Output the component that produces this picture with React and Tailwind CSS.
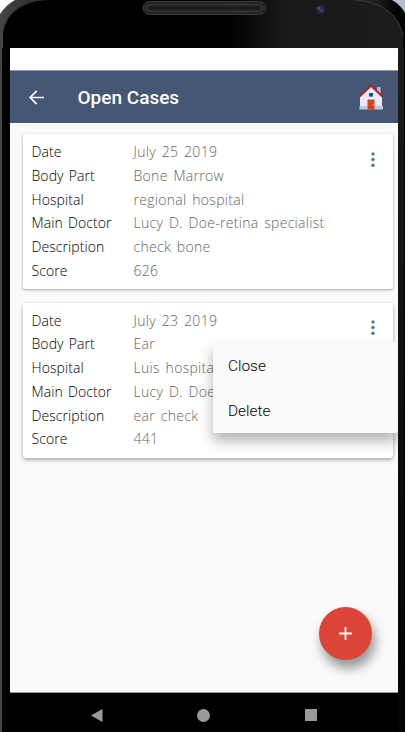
const FIELDS = ['Date', 'Body Part', 'Hospital', 'Main Doctor', 'Description', 'Score'];

const CASES = [
  ['July 25 2019', 'Bone Marrow', 'regional hospital', 'Lucy D. Doe-retina specialist', 'check bone', '626'],
  ['July 23 2019', 'Ear', 'Luis hospital', 'Lucy D. Doe-retina specialist', 'ear check', '441'],
];

function TopBezel() {
  return (
    <svg className="block h-12 w-full" viewBox="0 0 405 48">
      <defs>
        <linearGradient id="shine" x1="0" x2="1" y1="0" y2="0">
          <stop offset="0" stopColor="#000" />
          <stop offset="0.56" stopColor="#000" />
          <stop offset="0.7" stopColor="#191919" />
          <stop offset="1" stopColor="#1c1c1c" />
        </linearGradient>
        <linearGradient id="rim" x1="0" x2="1" y1="0" y2="0">
          <stop offset="0" stopColor="#444" />
          <stop offset="0.08" stopColor="#303030" />
          <stop offset="0.14" stopColor="#0c0c0c" />
          <stop offset="0.92" stopColor="#222" />
          <stop offset="0.97" stopColor="#080808" />
          <stop offset="1" stopColor="#000" />
        </linearGradient>
        <radialGradient id="lens">
          <stop offset="0" stopColor="#35406e" />
          <stop offset="0.55" stopColor="#202642" />
          <stop offset="1" stopColor="#181818" />
        </radialGradient>
      </defs>
      <rect width="20" height="20" fill="#fff" />
      <rect x="385" width="20" height="20" fill="#b6bfd0" />
      <path d="M0 48V14Q6 5 15 0H392Q400 4 405 13V48Z" fill="url(#rim)" />
      <path d="M3 48V34C5 14 22 0 52 0H356C381 1 400 16 403 36V48Z" fill="url(#shine)" />
      <path d="M356 .5C381 1 400 16 403 36" fill="none" stroke="#444" strokeWidth=".8" />
      <rect x="143" y="1.5" width="123" height="13" rx="6.5" fill="#262626" stroke="#373737" />
      <rect x="147" y="5" width="115" height="6" rx="3" fill="#1c1c1c" stroke="#494949" strokeWidth=".8" />
      <circle cx="320.5" cy="9.5" r="6" fill="url(#lens)" />
      <circle cx="318.5" cy="8" r="1.2" fill="#4c5681" />
      <circle cx="322" cy="11" r="1" fill="#414c7b" />
    </svg>
  );
}

function House() {
  return (
    <svg className="h-[26px] w-6" viewBox="0 0 24 26">
      <rect x="18" y="3" width="3.6" height="8" fill="#aebbd9" />
      <path d="M1 12L12 2L23 12V25H1Z" fill="#e9ebf8" />
      <rect x="0.5" y="22" width="23.5" height="3.5" fill="#c2c8e8" />
      <path d="M.6 12.6L12 1.8L23.4 12.6" fill="none" stroke="#b71c1c" strokeWidth="1.9" />
      <rect x="10" y="9" width="4" height="3.6" fill="#01579b" />
      <rect x="8.5" y="15.5" width="7" height="10" fill="#d84315" />
      <rect x="13.5" y="20" width="1" height="2" fill="#ff8a65" />
    </svg>
  );
}

function Dots() {
  return (
    <svg className="h-4 w-1 fill-[#557c8e]" viewBox="0 0 4 16">
      <circle cx="2" cy="2" r="1.75" />
      <circle cx="2" cy="7.6" r="1.75" />
      <circle cx="2" cy="13.2" r="1.75" />
    </svg>
  );
}

function CaseCard({ values, raised, children }) {
  return (
    <article
      className={
        'relative ml-[12.5px] flex h-[155px] w-[370.5px] justify-between rounded-[3px] bg-white pl-[9px] pr-[18px] ' +
        (raised ? 'shadow-[0_2px_4px_rgba(0,0,0,0.32)]' : 'shadow-[0_1px_3px_rgba(0,0,0,0.34)]')
      }
    >
      <dl className="mt-[6.3px] grid auto-rows-[23.7px] grid-cols-[102px_auto] items-center whitespace-nowrap font-['Open_Sans',sans-serif] text-[14px] font-light leading-[23.7px]">
        {FIELDS.map((label, i) => (
          <div key={label} className="contents">
            <dt className="tracking-[0.08px] text-[#000] [word-spacing:1.5px]">{label}</dt>
            <dd className="tracking-[0.3px] text-[#666] [word-spacing:1.8px]">{values[i]}</dd>
          </div>
        ))}
      </dl>
      <button className="mt-[17.5px] h-4" aria-label="Case options">
        <Dots />
      </button>
      {children}
    </article>
  );
}

export default function App() {
  return (
    <div className="flex h-[732px] w-[405px] flex-col overflow-hidden bg-black font-[Roboto,sans-serif]">
      <TopBezel />
      <div className="flex h-[684px]">
        <div className="w-[10px] border-l-[2px] border-[#444] bg-black" />
        <div className="flex w-[388px] flex-col overflow-hidden">
          <div className="h-[22px] bg-white" />
          <header className="flex h-[53px] items-center border-t border-[#8c98a8] bg-[#455775] pl-[18.5px] pr-[15px]">
            <svg className="h-[15px] w-[15px]" viewBox="0 0 16 16" fill="none" stroke="#fff" strokeWidth="1.8">
              <path d="M8.2 1L1.2 8L8.2 15M1.2 8H16" />
            </svg>
            <h1 className="ml-[34px] flex-1 pt-[2px] text-[19px] font-medium text-white">Open Cases</h1>
            <House />
          </header>
          <main className="flex h-[570px] flex-col gap-[13.5px] border-b border-[#999] bg-[#fafafa] pt-[11px]">
            <CaseCard values={CASES[0]} />
            <CaseCard values={CASES[1]} raised>
              <div className="absolute left-[190.5px] top-[39.5px] flex h-[91px] w-[185px] flex-col rounded-[2px] bg-[#fafafa] pl-[15px] pt-[1.5px] font-['Roboto',sans-serif] text-[15.4px] font-light leading-[45px] text-black shadow-[0_8px_14px_rgba(0,0,0,0.3)]">
                <span>Close</span>
                <span>Delete</span>
              </div>
            </CaseCard>
            <button
              aria-label="Add case"
              className="mb-[32px] mr-[26px] mt-auto flex h-[53px] w-[53px] items-center justify-center self-end rounded-full bg-[#db4437] shadow-[3px_8px_12px_rgba(0,0,0,0.42)]"
            >
              <svg className="h-[13px] w-[13px]" viewBox="0 0 13 13" stroke="#fff" strokeWidth="1.8">
                <path d="M0 6.5H13M6.5 0V13" />
              </svg>
            </button>
          </main>
          <nav className="flex flex-1 items-center pt-[5px]">
            <svg className="ml-[80.5px] h-[13px] w-[12px] fill-[#999]" viewBox="0 0 12 13">
              <path d="M0 6.5L11.5 0V13Z" />
            </svg>
            <div className="ml-[94.5px] h-[13px] w-[13px] rounded-full bg-[#999]" />
            <div className="ml-[95px] h-[12px] w-[12px] bg-[#999]" />
          </nav>
        </div>
        <div className="flex w-[7px] flex-col">
          <div className="flex-1 border-r border-black bg-linear-to-b from-[#1c1c1c] to-[#050505]" />
        </div>
      </div>
    </div>
  );
}
